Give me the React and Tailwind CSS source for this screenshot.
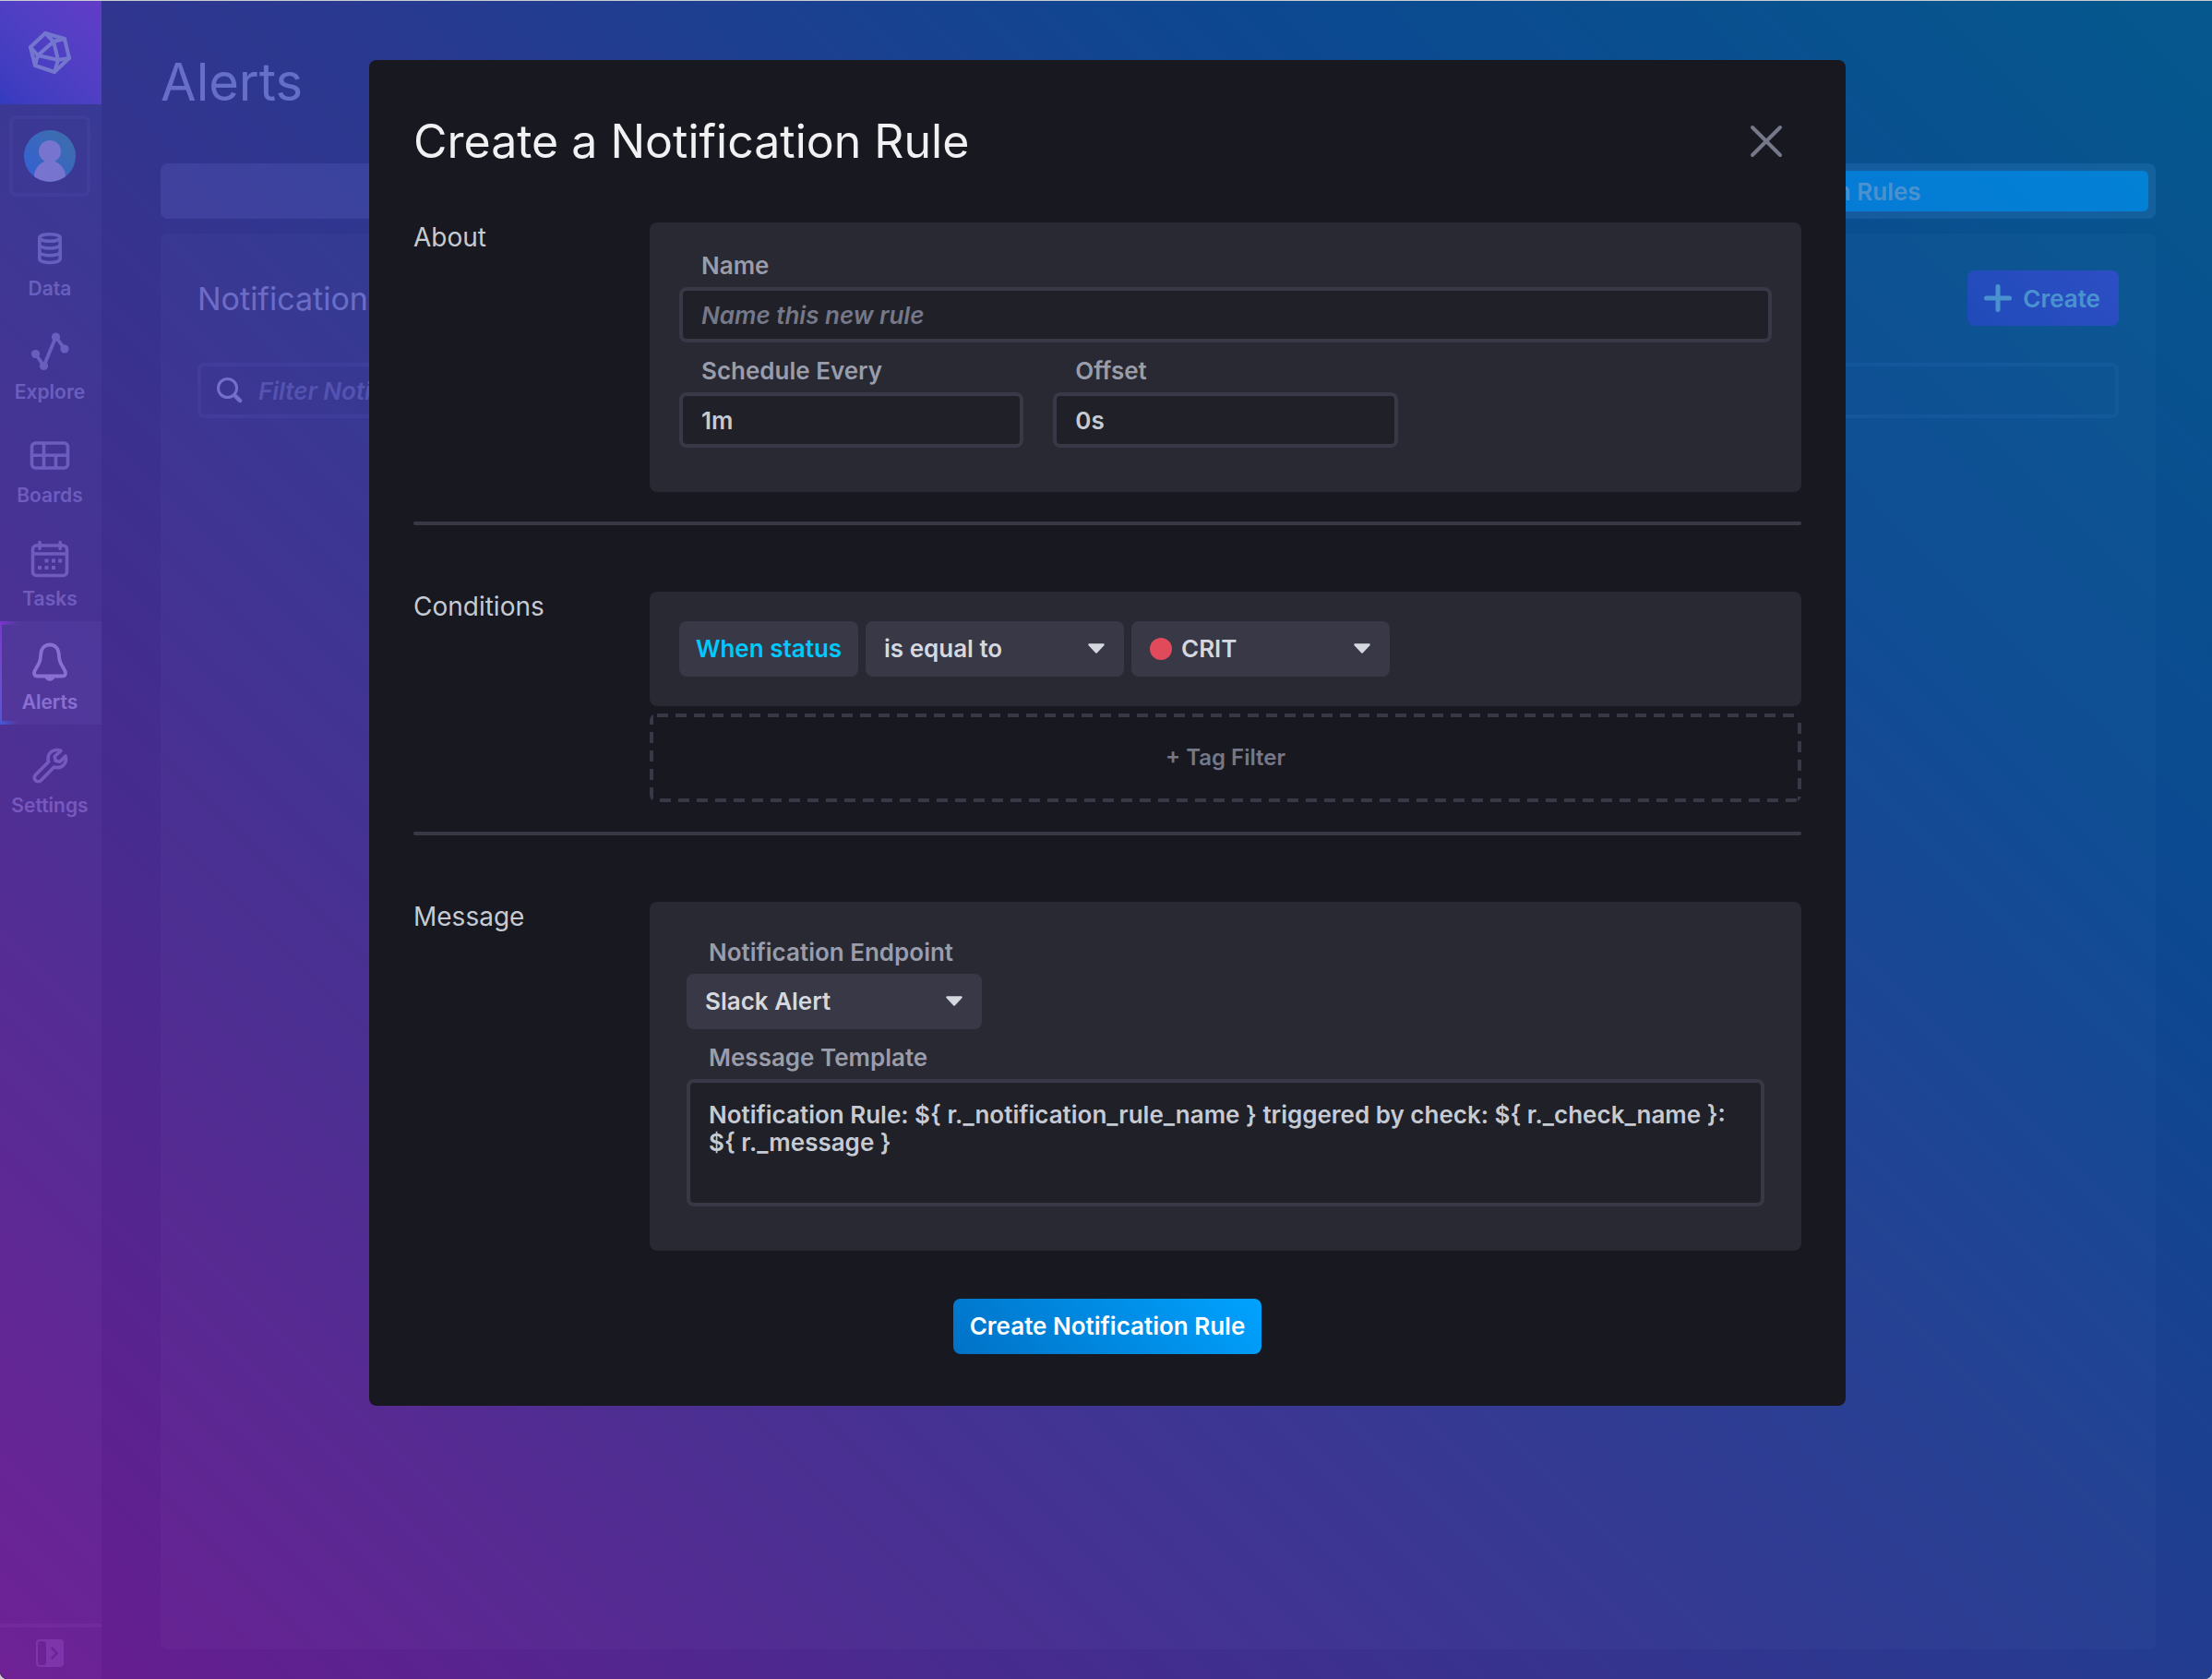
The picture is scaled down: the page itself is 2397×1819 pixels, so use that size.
import React from "react";

const navItems = [
  { label: "Data", icon: DataIcon },
  { label: "Explore", icon: ExploreIcon },
  { label: "Boards", icon: BoardsIcon },
  { label: "Tasks", icon: TasksIcon },
  { label: "Alerts", icon: BellIcon, active: true },
  { label: "Settings", icon: WrenchIcon },
];

function LogoIcon() {
  return (
    <svg width="48" height="48" viewBox="0 0 48 48" fill="none" stroke="currentColor" strokeWidth="4" strokeLinejoin="round" strokeLinecap="round" aria-hidden="true">
      <path d="M19 4 40 10 45 31 29 46 8 39 3 19Z" />
      <path d="M28 13 11 28 33 33Z" />
      <path d="M19 4 28 13 40 10M3 19 11 28 8 39M45 31 33 33 29 46" />
    </svg>
  );
}

function DataIcon() {
  return (
    <svg width="44" height="44" viewBox="0 0 44 44" fill="none" stroke="currentColor" strokeWidth="3.6" aria-hidden="true">
      <ellipse cx="22" cy="10.5" rx="11.2" ry="3.8" />
      <path d="M10.8 10.5v23c0 2.2 5 4 11.2 4s11.2-1.8 11.2-4v-23" />
      <path d="M10.8 18c0 2.2 5 4 11.2 4s11.2-1.8 11.2-4M10.8 25.8c0 2.2 5 4 11.2 4s11.2-1.8 11.2-4" />
    </svg>
  );
}

function ExploreIcon() {
  return (
    <svg width="44" height="44" viewBox="0 0 44 44" fill="none" stroke="currentColor" strokeWidth="3.8" strokeLinejoin="round" aria-hidden="true">
      <path d="M6.5 24.5 15.5 37.5 28.5 6 38 19" />
      <g fill="currentColor" stroke="none">
        <circle cx="6.5" cy="24.5" r="4.6" />
        <circle cx="15.500" cy="37.5" r="4.6" />
        <circle cx="28.5" cy="6" r="4.6" />
        <circle cx="38" cy="19" r="4.6" />
      </g>
    </svg>
  );
}

function BoardsIcon() {
  return (
    <svg width="44" height="44" viewBox="0 0 44 44" fill="none" stroke="currentColor" strokeWidth="3.6" aria-hidden="true">
      <rect x="2.5" y="9" width="39" height="27" rx="4" />
      <path d="M2.5 22.3h39M15.5 9v27M28.5 22.300v13.700" />
    </svg>
  );
}

function TasksIcon() {
  return (
    <svg width="44" height="44" viewBox="0 0 44 44" fill="none" stroke="currentColor" strokeWidth="3.6" aria-hidden="true">
      <rect x="3.5" y="8" width="37" height="32.5" rx="4" />
      <path d="M3.5 17h37" />
      <path d="M11 4.5v7M33.2 4.5v7" strokeLinecap="round" />
      <g fill="currentColor" stroke="none">
        <path d="M16.5 22.500h4v4h-4zM24 22.500h4v4h-4zM31.200 22.500h4v4h-4zM9 30h4v4h-4zM16.500 30h4v4h-4zM24 30h4v4h-4z" />
      </g>
    </svg>
  );
}

function BellIcon() {
  return (
    <svg width="44" height="44" viewBox="0 0 44 44" fill="none" stroke="currentColor" strokeWidth="3.8" strokeLinejoin="round" aria-hidden="true">
      <path d="M22 3.5c-6 0-9.500 4.300-9.800 10.500-.3 7-1.700 9.500-4.600 14.300-1.200 2-2.600 4-2.600 6 0 2 1.300 3.200 3.200 3.200h27.600c1.900 0 3.200-1.200 3.200-3.200 0-2-1.400-4-2.600-6-2.900-4.800-4.300-7.300-4.600-14.300-.3-6.200-3.800-10.500-9.800-10.500z" />
      <path d="M16.500 38.500h11c-.6 2.600-2.800 4.300-5.500 4.300s-4.900-1.700-5.500-4.300z" fill="currentColor" stroke="none" />
    </svg>
  );
}

function WrenchIcon() {
  return (
    <svg width="44" height="44" viewBox="0 0 44 44" fill="none" stroke="currentColor" strokeWidth="3.6" strokeLinejoin="round" strokeLinecap="round" aria-hidden="true">
      <path d="M34 6.500c-4.500-2-9.500-1-12 2.500-2 2.800-2.500 5.800-1.300 9.300L6.500 32.500c-1.700 1.700-1.700 4.200 0 5.900s4.200 1.700 5.900 0L26.600 24c3.500 1.200 7 .6 9.600-1.500 3-2.500 4-6.500 2.800-10.500l-6 6.200-4.800-1-1-4.700z" />
    </svg>
  );
}

function ExpandIcon() {
  return (
    <svg width="30" height="30" viewBox="0 0 30 30" aria-hidden="true">
      <rect width="30" height="30" rx="4" fill="#5c5c6e" />
      <rect x="2" y="2" width="9" height="26" rx="3" fill="#202028" />
      <path d="m17.500 9.500 5 5.500-5 5.500" fill="none" stroke="#202028" strokeWidth="2.600" strokeLinecap="round" />
    </svg>
  );
}

function Avatar() {
  return (
    <svg width="56" height="56" viewBox="0 0 56 56" aria-hidden="true">
      <defs>
        <linearGradient id="avatar-fill" x1="0" y1="1" x2="1" y2="0">
          <stop offset="0" stopColor="#00a3ff" />
          <stop offset="1" stopColor="#32d56b" />
        </linearGradient>
        <clipPath id="avatar-clip">
          <circle cx="28" cy="28" r="28" />
        </clipPath>
      </defs>
      <g clipPath="url(#avatar-clip)">
        <rect width="56" height="56" fill="url(#avatar-fill)" />
        <circle cx="28" cy="23" r="12" fill="#e7e8eb" />
        <path d="M11 56v-6c0-9 7.500-17 17-17s17 8 17 17v6z" fill="#e7e8eb" />
      </g>
    </svg>
  );
}

function Sidebar() {
  return (
    <nav className="flex w-[110px] shrink-0 flex-col bg-[#202028]">
      <a href="#home" aria-label="Home" className="flex h-28 items-center justify-center bg-linear-45 from-[#0028b8] to-[#b41ed0] pr-0.5 pb-0.5 text-[#e7e8eb]">
        <LogoIcon />
      </a>
      <button aria-label="Account" className="mx-2.5 my-3 flex size-[88px] items-center justify-center rounded-lg border-4 border-[#30303c]">
        <Avatar />
      </button>
      {navItems.map(({ label, icon: Icon, active }) => (
        <a
          key={label}
          href={"#" + label.toLowerCase()}
          className={
            active
              ? "relative flex h-28 flex-col items-center bg-[#34343f] pt-[22px] pr-0.5 text-[#eeeff2]"
              : "relative flex h-28 flex-col items-center pt-[22px] pr-0.5 text-[#a4a8b6]"
          }
        >
          {active && (
            <>
              <span className="absolute inset-y-0 left-0 w-0.5 bg-linear-to-t from-[#00a3ff] to-[#be2ee4]" />
              <span className="absolute top-0 left-0 h-1 w-5 bg-linear-to-r from-[#be2ee4] to-transparent" />
              <span className="absolute bottom-0 left-0 h-1 w-5 bg-linear-to-r from-[#00a3ff] to-transparent" />
            </>
          )}
          <Icon />
          <span className="mt-2 text-[21px] leading-7 font-semibold">{label}</span>
        </a>
      ))}
      <button aria-label="Expand navigation" className="mt-auto flex h-15 items-center justify-center border-t-4 border-[#383846] pr-0.5">
        <ExpandIcon />
      </button>
    </nav>
  );
}

function AlertsPage() {
  return (
    <main className="flex flex-1 flex-col pr-[61px] pb-8 pl-16">
      <header className="flex h-44 items-center">
        <h1 className="text-[56px] leading-none text-[#c6cad3]">Alerts</h1>
      </header>
      <div className="grid h-15 grid-cols-3 rounded-lg bg-[#383846] p-2 text-[26px] font-semibold">
        <button className="rounded-md text-[#a4a8b6]">Checks</button>
        <button className="rounded-md text-[#a4a8b6]">Notification Endpoints</button>
        <button className="flex items-center justify-center rounded-md bg-[#00a3ff] text-[#e7e8eb]">Notification Rules</button>
      </div>
      <section className="mt-4 flex-1 rounded-lg bg-[#1c1c21] p-10">
        <div className="flex h-15 items-center justify-between">
          <h2 className="text-[34px] text-[#c6cad3]">Notification Rules</h2>
          <button className="flex h-15 items-center gap-3 rounded-lg bg-linear-45 from-[#5c00a0] to-[#8b00c8] pr-5 pl-[18px] text-[26px] font-semibold text-[#e7e8eb]">
            <svg width="30" height="30" viewBox="0 0 30 30" fill="none" stroke="currentColor" strokeWidth="5" strokeLinecap="round" aria-hidden="true">
              <path d="M15 2.500v25M2.500 15h25" />
            </svg>
            Create
          </button>
        </div>
        <label className="mt-10 flex h-15 items-center gap-4 rounded-lg border-4 border-[#30303c] px-4 text-[#d5d8de]">
          <svg width="30" height="30" viewBox="0 0 30 30" fill="none" stroke="currentColor" aria-hidden="true">
            <circle cx="12.500" cy="12.500" r="10" strokeWidth="3" />
            <path d="m20.500 20.500 5.500 5.500" strokeWidth="4.500" strokeLinecap="round" />
          </svg>
          <input
            aria-label="Filter Notification Rules"
            placeholder="Filter Notification Rules..."
            className="h-full flex-1 bg-transparent text-[26px] font-semibold italic outline-none placeholder:text-[#757888]"
          />
        </label>
      </section>
    </main>
  );
}

function Section({ title, children }) {
  return (
    <section className="flex">
      <h3 className="w-64 shrink-0 text-[28px] leading-8 text-[#c6cad3]">{title}</h3>
      <div className="min-w-0 flex-1">{children}</div>
    </section>
  );
}

function Divider() {
  return <hr className="mt-8 mb-18 h-1 rounded-full border-0 bg-[#383846]" />;
}

function TextField({ id, label, ...rest }) {
  return (
    <div>
      <label htmlFor={id} className="block h-[38px] pl-6 text-[26px] leading-[30px] font-semibold text-[#999dab]">
        {label}
      </label>
      <input
        id={id}
        className="block h-15 w-full rounded-lg border-4 border-[#383846] bg-[#202028] px-5 text-[26px] font-semibold text-[#c6cad3] outline-none placeholder:text-[#757888] placeholder:italic"
        {...rest}
      />
    </div>
  );
}

function Caret() {
  return (
    <svg width="20" height="12" viewBox="0 0 20 12" className="pointer-events-none absolute top-6 right-5" aria-hidden="true">
      <path d="M2.500 1.500h15L10 9.500z" fill="#d5d8de" stroke="#d5d8de" strokeWidth="2.500" strokeLinejoin="round" />
    </svg>
  );
}

const selectBase = "h-15 w-full appearance-none rounded-lg bg-[#383846] pr-12 pb-0.5 text-[26px] font-semibold text-[#d5d8de] outline-none";

function RuleDialog() {
  return (
    <form
      role="dialog"
      aria-labelledby="dialog-title"
      onSubmit={(e) => e.preventDefault()}
      className="relative w-full max-w-[1600px] rounded-lg bg-[#181820] px-12 pb-14"
    >
      <header className="flex h-44 items-center justify-between pr-[18px]">
        <h2 id="dialog-title" className="text-[50px] leading-none text-[#f1f1f3]">Create a Notification Rule</h2>
        <button type="button" aria-label="Close" className="flex size-10 items-center justify-center">
          <svg width="36" height="36" viewBox="0 0 36 36" fill="none" stroke="#757888" strokeWidth="4" strokeLinecap="round" aria-hidden="true">
            <path d="m3 3 30 30M33 3 3 33" />
          </svg>
        </button>
      </header>

      <Section title="About">
        <div className="rounded-lg bg-[#292933] px-8 pt-8 pb-12">
          <TextField id="rule-name" label="Name" placeholder="Name this new rule" />
          <div className="mt-4 grid grid-cols-3 gap-8">
            <TextField id="rule-every" label="Schedule Every" defaultValue="1m" />
            <TextField id="rule-offset" label="Offset" defaultValue="0s" />
          </div>
        </div>
      </Section>
      <Divider />

      <Section title="Conditions">
        <div className="flex gap-2 rounded-lg bg-[#292933] p-8">
          <span className="flex h-15 w-[194px] items-center justify-center rounded-lg bg-[#383846] pb-0.5 text-[26px] font-semibold whitespace-nowrap text-[#00c9ff]">When status</span>
          <div className="relative w-70">
            <select aria-label="Comparison" className={selectBase + " pl-5"}>
              <option>is equal to</option>
              <option>changes from</option>
            </select>
            <Caret />
          </div>
          <div className="relative w-70">
            <select aria-label="Status level" className={selectBase + " pl-[54px]"}>
              <option>CRIT</option>
              <option>WARN</option>
              <option>INFO</option>
              <option>OK</option>
            </select>
            <span className="pointer-events-none absolute top-[18px] left-5 size-6 rounded-full bg-[#e04a5a]" />
            <Caret />
          </div>
        </div>
        <button
          type="button"
          className="mt-2 h-24 w-full rounded-lg text-2xl font-semibold text-[#757888] [background:linear-gradient(90deg,#383846_60%,transparent_0)_8px_0/20px_4px_repeat-x,linear-gradient(90deg,#383846_60%,transparent_0)_11px_100%/20px_4px_repeat-x,linear-gradient(#383846_60%,transparent_0)_0_0/4px_20px_repeat-y,linear-gradient(#383846_60%,transparent_0)_100%_10px/4px_20px_repeat-y]"
        >
          + Tag Filter
        </button>
      </Section>
      <Divider />

      <Section title="Message">
        <div className="rounded-lg bg-[#292933] px-10 pt-10 pb-12">
          <label htmlFor="endpoint" className="block h-[38px] pl-6 text-[26px] leading-[30px] font-semibold text-[#999dab]">
            Notification Endpoint
          </label>
          <div className="relative w-80">
            <select id="endpoint" className={selectBase + " pl-5"}>
              <option>Slack Alert</option>
            </select>
            <Caret />
          </div>
          <label htmlFor="template" className="mt-4 block h-[38px] pl-6 text-[26px] leading-[30px] font-semibold text-[#999dab]">
            Message Template
          </label>
          <textarea
            id="template"
            spellCheck={false}
            className="block h-[138px] w-full resize-none rounded-lg border-4 border-[#383846] bg-[#202028] px-5 py-5 text-[26px] leading-[30px] font-semibold text-[#c6cad3] outline-none"
            defaultValue={"Notification Rule: ${ r._notification_rule_name } triggered by check: ${ r._check_name }: ${ r._message }"}
          />
        </div>
      </Section>

      <div className="mt-13 flex justify-center">
        <button type="submit" className="h-15 rounded-lg bg-linear-45 from-[#0072c6] to-[#00a3ff] px-[18px] pb-0.5 text-[26px] font-semibold text-white">
          Create Notification Rule
        </button>
      </div>
    </form>
  );
}

export default function App() {
  return (
    <div className="bg-[#c9cdd2] pt-px font-['Inter',sans-serif]">
      <div className="relative flex min-h-[calc(100vh-1px)] overflow-hidden rounded-b-lg bg-[#0f0e15]">
        <Sidebar />
        <AlertsPage />
        <div className="absolute inset-0 flex items-start justify-center pt-16 pl-[3px]">
          <div className="absolute inset-0 bg-[linear-gradient(45deg,#9022c4_0%,#6037c2_25%,#374ac3_50%,#0b61c5_75%,#0178c2_100%)] opacity-70" />
          <RuleDialog />
        </div>
      </div>
    </div>
  );
}
